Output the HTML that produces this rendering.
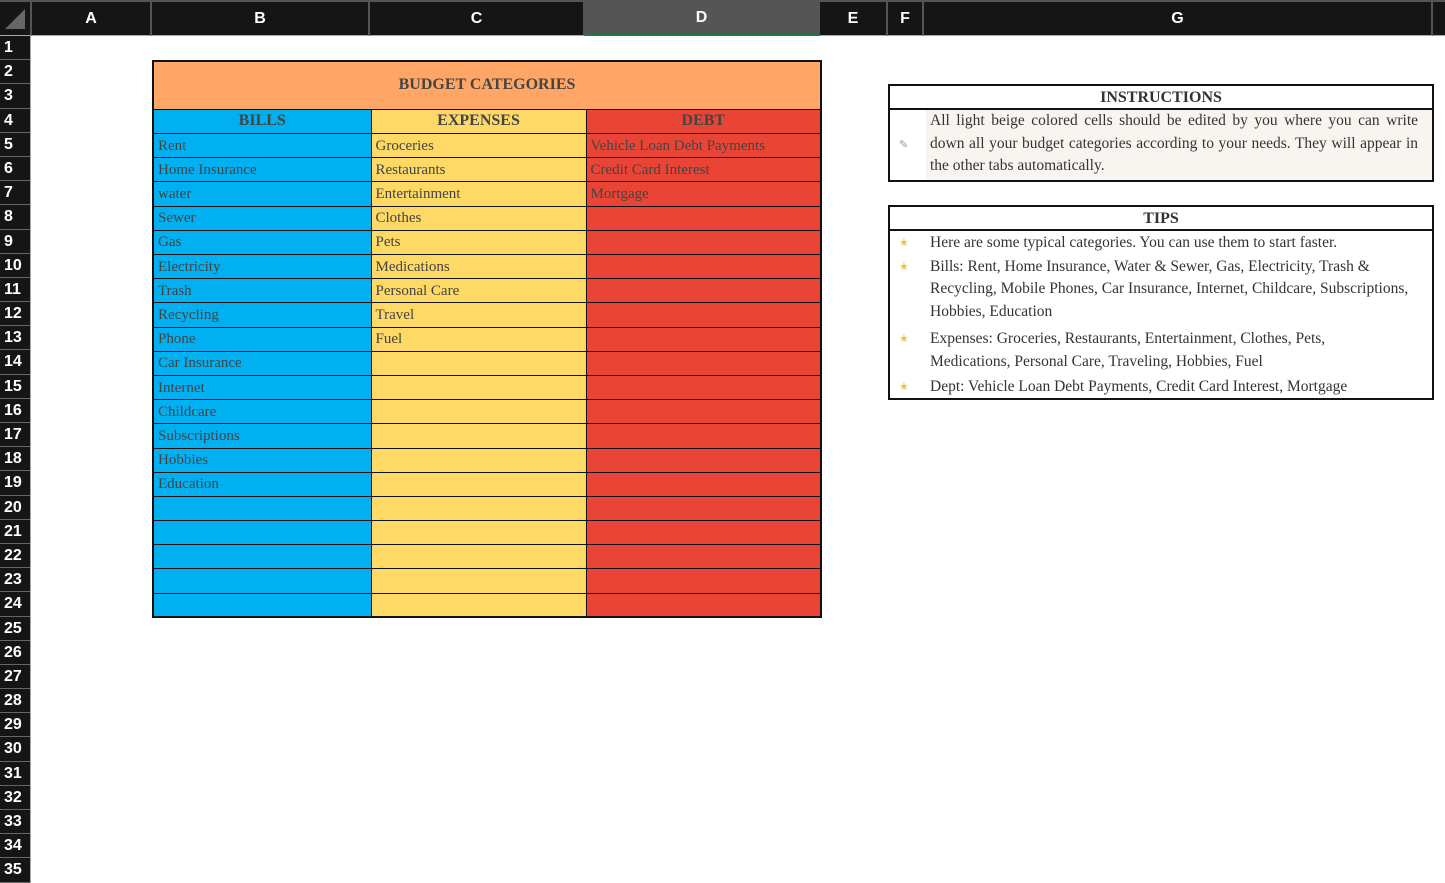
<!DOCTYPE html>
<html><head><meta charset="utf-8"><style>
*{margin:0;padding:0;box-sizing:border-box}
body{width:1445px;height:883px;overflow:hidden;background:#fff;position:relative;font-family:"Liberation Serif",serif}
.ch{position:absolute;top:0;height:36px;background:#151515;color:#fff;font:bold 16px "Liberation Sans",sans-serif;display:flex;align-items:center;justify-content:center;border-right:2px solid #555;border-top:2px solid #555;border-bottom:1px solid #aaa}
#rh{position:absolute;left:0;top:36px;width:31px;background:#151515;border-right:1px solid #aaa}
#rh div{height:24.2px;color:#fff;font:bold 16px "Liberation Sans",sans-serif;line-height:24px;padding-left:4px;border-bottom:1px solid #666}
table{position:absolute;left:152px;top:60px;width:668px;border-collapse:collapse;table-layout:fixed;border:2px solid #111}
td{height:24.2px;border:1.5px solid #111;font-size:15px;color:#444;padding:0 0 0 4px;white-space:nowrap;overflow:hidden;line-height:20px}
td.b{background:#00b0f0}td.y{background:#ffd966}td.r{background:#e94435}
th{font-size:16px;color:#444;font-weight:bold;border:1.5px solid #111;height:24.2px}
.box{position:absolute;left:888px;width:546px;border:2px solid #111;font-size:15.5px;color:#333}
.box .t{height:24px;border-bottom:2px solid #111;text-align:center;font-weight:bold;font-size:16px;line-height:24px;color:#333}
.it{position:relative;padding-left:40px;line-height:22.7px}
.it .s{position:absolute;left:9px;top:0;color:#f5c242;font-size:11px}
</style></head><body>
<div class="ch" style="left:0;width:32px;background:#151515"><svg width="24" height="24"><polygon points="22,2 22,22 2,22" fill="#666"/></svg></div>
<div class="ch" style="left:32px;width:120px">A</div>
<div class="ch" style="left:152px;width:218px">B</div>
<div class="ch" style="left:370px;width:215px">C</div>
<div class="ch" style="left:585px;width:235px;background:#555;border-bottom:2px solid #1e7b3c">D</div>
<div class="ch" style="left:820px;width:68px">E</div>
<div class="ch" style="left:888px;width:36px">F</div>
<div class="ch" style="left:924px;width:509px">G</div>
<div class="ch" style="left:1433px;width:12px;border-right:none"></div>
<div id="rh"><div>1</div><div>2</div><div>3</div><div>4</div><div>5</div><div>6</div><div>7</div><div>8</div><div>9</div><div>10</div><div>11</div><div>12</div><div>13</div><div>14</div><div>15</div><div>16</div><div>17</div><div>18</div><div>19</div><div>20</div><div>21</div><div>22</div><div>23</div><div>24</div><div>25</div><div>26</div><div>27</div><div>28</div><div>29</div><div>30</div><div>31</div><div>32</div><div>33</div><div>34</div><div>35</div></div>
<table>
<colgroup><col style="width:218px"><col style="width:215px"><col style="width:235px"></colgroup>
<tr><th colspan="3" style="height:48.4px;background:#ffa666">BUDGET CATEGORIES</th></tr>
<tr><th style="background:#00b0f0">BILLS</th><th style="background:#ffd966">EXPENSES</th><th style="background:#e94435">DEBT</th></tr>
<tr><td class="b">Rent</td><td class="y">Groceries</td><td class="r">Vehicle Loan Debt Payments</td></tr>
<tr><td class="b">Home Insurance</td><td class="y">Restaurants</td><td class="r">Credit Card Interest</td></tr>
<tr><td class="b">water</td><td class="y">Entertainment</td><td class="r">Mortgage</td></tr>
<tr><td class="b">Sewer</td><td class="y">Clothes</td><td class="r"></td></tr>
<tr><td class="b">Gas</td><td class="y">Pets</td><td class="r"></td></tr>
<tr><td class="b">Electricity</td><td class="y">Medications</td><td class="r"></td></tr>
<tr><td class="b">Trash</td><td class="y">Personal Care</td><td class="r"></td></tr>
<tr><td class="b">Recycling</td><td class="y">Travel</td><td class="r"></td></tr>
<tr><td class="b">Phone</td><td class="y">Fuel</td><td class="r"></td></tr>
<tr><td class="b">Car Insurance</td><td class="y"></td><td class="r"></td></tr>
<tr><td class="b">Internet</td><td class="y"></td><td class="r"></td></tr>
<tr><td class="b">Childcare</td><td class="y"></td><td class="r"></td></tr>
<tr><td class="b">Subscriptions</td><td class="y"></td><td class="r"></td></tr>
<tr><td class="b">Hobbies</td><td class="y"></td><td class="r"></td></tr>
<tr><td class="b">Education</td><td class="y"></td><td class="r"></td></tr>
<tr><td class="b"></td><td class="y"></td><td class="r"></td></tr>
<tr><td class="b"></td><td class="y"></td><td class="r"></td></tr>
<tr><td class="b"></td><td class="y"></td><td class="r"></td></tr>
<tr><td class="b"></td><td class="y"></td><td class="r"></td></tr>
<tr><td class="b"></td><td class="y"></td><td class="r"></td></tr>
</table>
<div class="box" style="top:84px;height:98px">
<div class="t">INSTRUCTIONS</div>
<div class="it" style="margin-left:0;padding-top:0;height:70px"><span class="s" style="top:24px;color:#998">✎</span><div style="background:#f8f5f0;margin-left:-4px;padding-left:4px;height:70px;padding-right:14px;text-align:justify">All light beige colored cells should be edited by you where you can write down all your budget categories according to your needs. They will appear in the other tabs automatically.</div></div>
</div>
<div class="box" style="top:205px;height:195px">
<div class="t">TIPS</div>
<div class="it" style="margin-top:1px"><span class="s">★</span>Here are some typical categories. You can use them to start faster.</div>
<div class="it" style="margin-top:1px;padding-right:10px"><span class="s">★</span>Bills: Rent, Home Insurance, Water &amp; Sewer, Gas, Electricity, Trash &amp; Recycling, Mobile Phones, Car Insurance, Internet, Childcare, Subscriptions, Hobbies, Education</div>
<div class="it" style="margin-top:4px"><span class="s">★</span>Expenses: Groceries, Restaurants, Entertainment, Clothes, Pets,<br>Medications, Personal Care, Traveling, Hobbies, Fuel</div>
<div class="it" style="margin-top:3px"><span class="s">★</span>Dept: Vehicle Loan Debt Payments, Credit Card Interest, Mortgage</div>
</div>
</body></html>
